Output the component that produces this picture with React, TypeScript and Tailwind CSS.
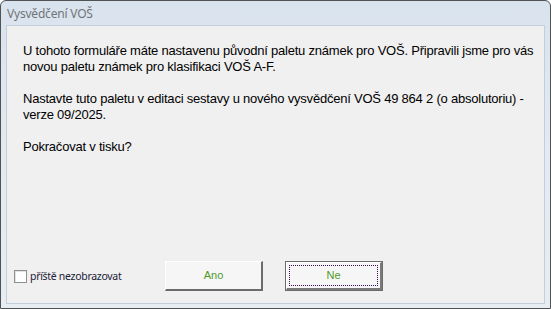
import React from "react";

const App = () => {
  return (
    <div className="w-[551px] h-[309px] bg-white">
      <div className="flex h-full w-full flex-col rounded-t-[6px] border border-[#505356] bg-gradient-to-b from-[#d9e3ee] via-[#e4eaf1] to-[#e8edf3] px-[5px] pb-[4px] pl-[5px]">
        {/* title bar */}
        <div className="flex h-[24px] shrink-0 items-center pl-[1px] pt-[1px]">
          <span className="font-['Noto_Sans',sans-serif] text-[12px] leading-none tracking-[-0.2px] text-[#727578]">
            Vysvědčení VOŠ
          </span>
        </div>

        {/* client area */}
        <div className="flex flex-1 flex-col border border-[#c3cedb] bg-[#f0f0f0]">
          <div className="pl-[16px] pt-[17px] font-['Liberation_Sans',Arial,sans-serif] text-[13px] leading-[16px] tracking-[-0.22px] text-black">
            <p className="whitespace-nowrap">
              U tohoto formuláře máte nastavenu původní paletu známek pro VOŠ. Připravili jsme pro vás
              <br />
              novou paletu známek pro klasifikaci VOŠ A-F.
            </p>
            <p className="mt-[16px] whitespace-nowrap">
              Nastavte tuto paletu v editaci sestavy u nového vysvědčení VOŠ 49 864 2 (o absolutoriu) -
              <br />
              verze 09/2025.
            </p>
            <p className="mt-[16px]">Pokračovat v tisku?</p>
          </div>

          <div className="flex-1" />

          {/* bottom row */}
          <div className="mb-[12px] flex items-center">
            <div className="flex w-[158px] items-center pl-[7px]">
              <span className="h-[13px] w-[13px] border border-[#8f8f8f] bg-white shadow-[inset_1px_1px_0_#e3e3e3]" />
              <span className="ml-[3px] font-['Noto_Sans',sans-serif] text-[10.5px] leading-none tracking-[-0.3px] text-[#1a2136]">
                příště nezobrazovat
              </span>
            </div>
            <button className="flex h-[30px] w-[98px] items-center justify-center border-t border-l border-white border-r-2 border-b-2 border-r-[#6b6b6b] border-b-[#6b6b6b] bg-[#f6f6f6] font-['Liberation_Sans',Arial,sans-serif] text-[11px] text-[#4f9a2a]">
              Ano
            </button>
            <button className="ml-[22px] h-[30px] w-[98px] border border-[#6b6b6b] bg-[#f6f6f6] p-0">
              <div className="h-full w-full border-t border-l border-white border-r-2 border-b-2 border-r-[#7a7a7a] border-b-[#7a7a7a] p-[2px]">
                <div className="flex h-full w-full items-center justify-center border border-dotted border-[#3a0a50] font-['Liberation_Sans',Arial,sans-serif] text-[11px] text-[#4f9a2a]">
                  Ne
                </div>
              </div>
            </button>
          </div>
        </div>
      </div>
    </div>
  );
};

export default App;
